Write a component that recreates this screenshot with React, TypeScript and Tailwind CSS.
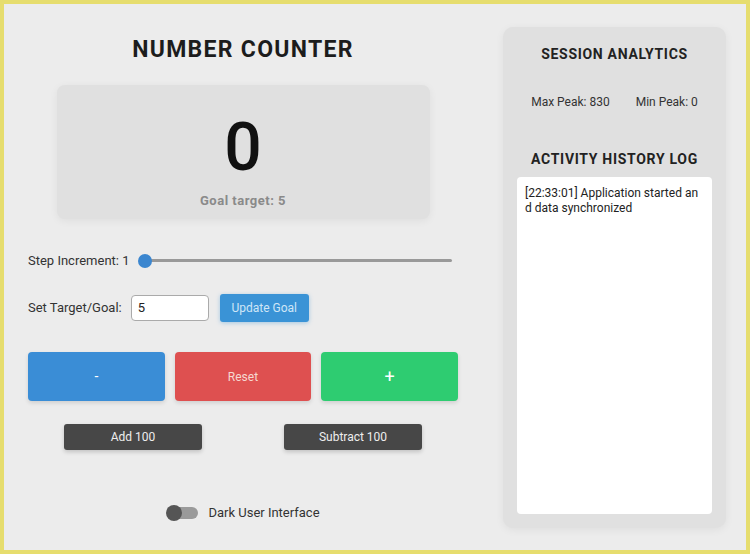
export default function App() {
  return (
    <div
      className="box-border flex h-[554px] w-[750px] border-[4px] border-[#e6dd6e] bg-[#ececec] pl-[24px] pt-[23px] text-[#222]"
      style={{ fontFamily: "Roboto, 'Liberation Sans', sans-serif" }}
    >
      {/* Left column */}
      <div className="flex w-[430px] flex-col">
        <h1 className="mt-[10px] h-[26px] text-center text-[23px] font-bold leading-[26px] tracking-[1.3px] text-[#1c1c1c]">
          NUMBER COUNTER
        </h1>

        <div className="mx-auto mt-[22px] flex h-[134px] w-[373px] flex-col items-center rounded-[8px] bg-[#e0e0e0] pt-[30px] shadow-[0_2px_8px_rgba(0,0,0,0.06)]">
          <div className="text-[66px] leading-none font-medium text-[#111]">0</div>
          <div className="mt-[12px] text-[13px] leading-[16px] font-bold tracking-[0.5px] text-[#8a8a8a]">Goal target: 5</div>
        </div>

        {/* Step slider */}
        <div className="mt-[34px] flex h-[16px] items-center">
          <span className="text-[13px] text-[#333]">Step Increment: 1</span>
          <div className="relative ml-[8px] h-[14px] w-[314px]">
            <div className="absolute left-[6px] right-0 top-[5px] h-[3px] rounded bg-[#999]" />
            <div className="absolute left-0 top-0 h-[14px] w-[14px] rounded-full bg-[#3b86cf]" />
          </div>
        </div>

        {/* Goal row */}
        <div className="mt-[25px] flex h-[28px] items-center">
          <span className="text-[13px] text-[#333]">Set Target/Goal:</span>
          <div className="ml-[9px] flex h-[26px] w-[78px] items-center rounded-[4px] border border-[#aaa] bg-white px-[6px] text-[13px] text-[#222]">
            5
          </div>
          <button className="ml-[11px] h-[28px] w-[89px] rounded-[3px] bg-[#3a93d6] text-[12px] text-[#cfe6f7] shadow-[0_1px_4px_rgba(58,147,214,0.4)]">
            Update Goal
          </button>
        </div>

        {/* Main buttons */}
        <div className="mt-[30px] grid grid-cols-3 gap-[10px]">
          <button className="h-[49px] rounded-[4px] bg-[#3a8dd6] text-[14px] text-white shadow-[0_2px_4px_rgba(0,0,0,0.12)]">
            -
          </button>
          <button className="h-[49px] rounded-[4px] bg-[#de5050] text-[12px] text-[#f6d8d0] shadow-[0_2px_4px_rgba(0,0,0,0.12)]">
            Reset
          </button>
          <button className="h-[49px] rounded-[4px] bg-[#2ecc71] text-[18px] text-white shadow-[0_2px_4px_rgba(0,0,0,0.12)]">
            +
          </button>
        </div>

        {/* Secondary buttons */}
        <div className="mt-[23px] flex justify-between px-[36px]">
          <button className="h-[26px] w-[138px] rounded-[3px] bg-[#474747] text-[12px] text-[#eee] shadow-[0_2px_4px_rgba(0,0,0,0.18)]">
            Add 100
          </button>
          <button className="h-[26px] w-[138px] rounded-[3px] bg-[#474747] text-[12px] text-[#eee] shadow-[0_2px_4px_rgba(0,0,0,0.18)]">
            Subtract 100
          </button>
        </div>

        {/* Dark mode toggle */}
        <div className="mt-[53px] flex items-center justify-center">
          <div className="relative h-[16px] w-[32px]">
            <div className="absolute left-[2px] right-0 top-[2px] h-[12px] rounded-full bg-[#9a9a9a]" />
            <div className="absolute left-0 top-0 h-[16px] w-[16px] rounded-full bg-[#555]" />
          </div>
          <span className="ml-[10px] text-[13px] text-[#333]">Dark User Interface</span>
        </div>
      </div>

      {/* Right panel */}
      <div className="ml-[45px] flex h-[501px] w-[223px] flex-col rounded-[10px] bg-[#e0e0e0] px-[14px] pb-[14px] shadow-[0_2px_8px_rgba(0,0,0,0.06)]">
        <h2 className="mt-[18px] text-center text-[14px] font-bold leading-[18px] tracking-[0.7px] text-[#222]">SESSION ANALYTICS</h2>
        <div className="mt-[31px] flex justify-center gap-[26px] text-[12px] leading-[16px] text-[#333]">
          <span>Max Peak: 830</span>
          <span>Min Peak: 0</span>
        </div>
        <h2 className="mt-[40px] text-center text-[14px] font-bold leading-[18px] tracking-[0.7px] text-[#222]">ACTIVITY HISTORY LOG</h2>
        <div className="mt-[9px] flex-1 break-all rounded-[4px] bg-white px-[8px] py-[9px] text-[12px] leading-[15px] text-[#222]">
          [22:33:01] Application started and data synchronized
        </div>
      </div>
    </div>
  )
}
